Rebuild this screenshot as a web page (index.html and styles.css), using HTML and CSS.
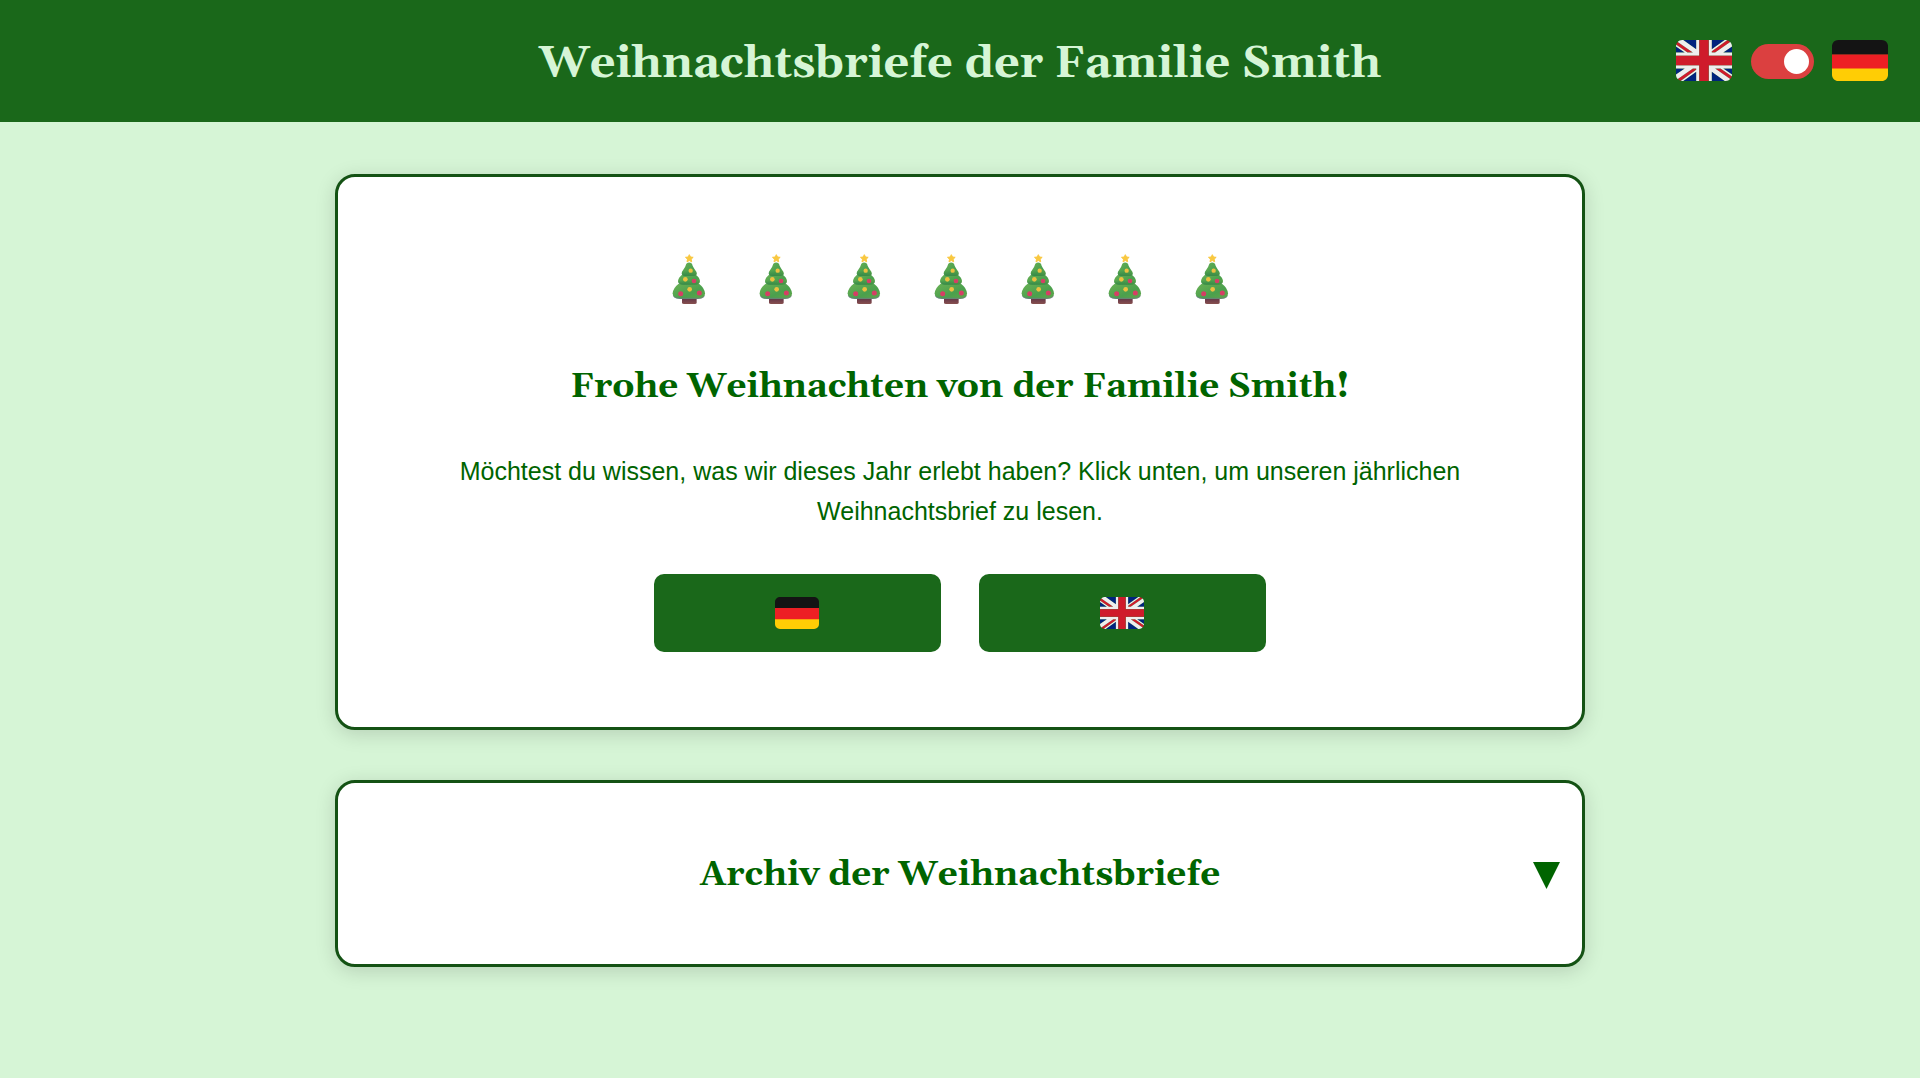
FILE: index.html
```html
<!DOCTYPE html>
<html lang="de">
<head>
<meta charset="utf-8">
<title>Weihnachtsbriefe der Familie Smith</title>
<link rel="stylesheet" href="styles.css">
</head>
<body>
<svg class="sprites" width="0" height="0" aria-hidden="true">
  <defs>
    <linearGradient id="leaf" x1="0" y1="0" x2="1" y2="1">
      <stop offset="0" stop-color="#6ab155"/>
      <stop offset=".6" stop-color="#4ba04d"/>
      <stop offset="1" stop-color="#62a848"/>
    </linearGradient>
    <linearGradient id="trunk" x1="0" y1="0" x2="0" y2="1">
      <stop offset="0" stop-color="#5b2f45"/>
      <stop offset="1" stop-color="#87504f"/>
    </linearGradient>
    <linearGradient id="shade" x1="0" y1="0" x2="0" y2="1">
      <stop offset=".6" stop-color="#2f7f45" stop-opacity="0"/>
      <stop offset="1" stop-color="#2f7f45" stop-opacity=".7"/>
    </linearGradient>
  </defs>
  <symbol id="tree" viewBox="36 27 102 150">
    <path fill="url(#trunk)" d="M66 156h44v17q0 4-6 4H72q-6 0-6-4z"/>
    <path fill="url(#leaf)" d="M56 116q-17 13-18 29 0 17 22 17h54q21 0 21-17-1-16-18-29z"/>
    <path fill="#7668a0" opacity=".45" d="M38 149q2 13 22 13h54q19 0 21-13-5 9-21 9H60q-17 0-22-9z"/>
    <path fill="url(#leaf)" d="M68 88q-13 10-14 20 0 11 16 11h34q16 0 16-11-1-10-14-20z"/>
    <path fill="url(#shade)" d="M68 88q-13 10-14 20 0 11 16 11h34q16 0 16-11-1-10-14-20z"/>
    <path fill="url(#leaf)" d="M79 56q8-7 17 0 2 9 13 24 5 12-9 13H76q-14-1-10-13 11-14 13-24z"/>
    <path fill="url(#shade)" d="M79 56q8-7 17 0 2 9 13 24 5 12-9 13H76q-14-1-10-13 11-14 13-24z"/>
    <path fill="#f9c840" stroke="#f9c840" stroke-width="3" stroke-linejoin="round" d="M88 29l3.500 7 8 1-6 5.500 1.500 8-7-4-7 4 1.500-8-6-5.500 8-1z"/>
    <g fill="#edc040"><circle cx="92" cy="77" r="6.500"/><circle cx="76" cy="103" r="7"/><circle cx="89" cy="133" r="7"/></g>
    <g fill="#d53f65"><circle cx="102" cy="108" r="7"/><circle cx="62" cy="146" r="7.500"/><circle cx="118" cy="144" r="7.500"/></g>
  </symbol>
  <symbol id="flag-de" viewBox="0 5 36 26" preserveAspectRatio="none">
    <path fill="#FFCD05" d="M0 27c0 2.209 1.791 4 4 4h28c2.209 0 4-1.791 4-4v-4.500H0V27z"/>
    <path fill="#ED1F24" d="M0 14h36v9H0z"/>
    <path fill="#141414" d="M32 5H4C1.791 5 0 6.791 0 9v5h36V9c0-2.209-1.791-4-4-4z"/>
  </symbol>
  <symbol id="flag-gb" viewBox="0 5 36 26" preserveAspectRatio="none">
    <path fill="#00247D" d="M0 9.059V13h5.628zM4.664 31H13v-5.837zM23 25.164V31h8.335zM0 23v3.941L5.630 23zM31.337 5H23v5.837zM36 26.942V23h-5.631zM36 13V9.059L30.371 13zM13 5H4.664L13 10.837z"/>
    <path fill="#CF1B2B" d="M25.140 23l9.712 6.801c.471-.479.808-1.082.990-1.749L28.627 23H25.140zM13 23h-2.141l-9.711 6.800c.521.530 1.189.909 1.938 1.085L13 23.943V23zm10-10h2.141l9.711-6.800c-.521-.530-1.188-.909-1.937-1.085L23 12.057V13zm-12.141 0L1.148 6.200C.677 6.680.340 7.282.157 7.949L7.372 13h3.487z"/>
    <path fill="#EEE" d="M36 21H21v10h2v-5.836L31.335 31H32c1.117 0 2.126-.461 2.852-1.199L25.140 23h3.487l7.215 5.052c.093-.337.158-.686.158-1.052v-.058L30.369 23H36v-2zM0 21v2h5.630L0 26.941V27c0 1.091.439 2.078 1.148 2.800l9.711-6.800H13v.943l-9.814 6.941c.264.073.532.116.814.116h.664L13 25.163V31h2V21H0zM36 9c0-1.091-.439-2.078-1.148-2.800L25.141 13H23v-.943l9.815-6.942C32.551 5.043 32.283 5 32 5h-.663L23 10.837V5h-2v10h15v-2h-5.629L36 9.059V9zM13 5v5.837L4.664 5H4c-1.118 0-2.126.461-2.852 1.200l9.711 6.800H7.372L.157 7.949C.065 8.286 0 8.635 0 9v.059L5.628 13H0v2h15V5h-2z"/>
    <path fill="#CF1B2B" d="M21 15V5h-6v10H0v6h15v10h6V21h15v-6z"/>
  </symbol>
</svg>

<header class="header">
  <h1 class="title">Weihnachtsbriefe der Familie Smith</h1>
  <div class="language">
    <svg class="flag"><use href="#flag-gb"/></svg>
    <span class="toggle"><span class="knob"></span></span>
    <svg class="flag"><use href="#flag-de"/></svg>
  </div>
</header>

<main class="content">
  <section class="card welcome">
    <div class="trees">
      <svg class="tree"><use href="#tree"/></svg>
      <svg class="tree"><use href="#tree"/></svg>
      <svg class="tree"><use href="#tree"/></svg>
      <svg class="tree"><use href="#tree"/></svg>
      <svg class="tree"><use href="#tree"/></svg>
      <svg class="tree"><use href="#tree"/></svg>
      <svg class="tree"><use href="#tree"/></svg>
    </div>
    <h2 class="heading">Frohe Weihnachten von der Familie Smith!</h2>
    <p class="intro">Möchtest du wissen, was wir dieses Jahr erlebt haben? Klick unten, um unseren jährlichen Weihnachtsbrief zu lesen.</p>
    <div class="buttons">
      <button class="button" aria-label="Deutsch"><svg class="flag-small"><use href="#flag-de"/></svg></button>
      <button class="button" aria-label="English"><svg class="flag-small"><use href="#flag-gb"/></svg></button>
    </div>
  </section>
  <section class="card archive">
    <h2 class="heading">Archiv der Weihnachtsbriefe</h2>
    <svg class="arrow" viewBox="0 0 27 27"><path d="M0 0h27L13.500 27z"/></svg>
  </section>
</main>
</body>
</html>
```
FILE: styles.css
```css
* { box-sizing: border-box; }

body {
  margin: 0;
  min-height: 100vh;
  background: #d6f5d6;
  color: #006400;
  font-family: "Liberation Sans", Arial, sans-serif;
}

.sprites { position: absolute; }

.header {
  display: grid;
  grid-template-columns: 1fr auto 1fr;
  align-items: center;
  height: 122px;
  padding: 0 32px;
  background: #1a681a;
}

.title {
  grid-column: 2;
  margin: 0;
  padding-top: 5px;
  color: #d6f5d6;
  font: bold 45px/60px Gelasio, Georgia, "Liberation Serif", serif;
  white-space: nowrap;
}

.language {
  display: flex;
  justify-content: flex-end;
  align-items: center;
  padding-bottom: 1px;
}

.flag { width: 56px; height: 41px; }

.toggle {
  display: flex;
  justify-content: flex-end;
  align-items: center;
  width: 63px;
  height: 35px;
  margin: 2px 18px 0 19px;
  padding: 5px;
  border-radius: 18px;
  background: #db4040;
}

.knob {
  width: 25px;
  height: 25px;
  border-radius: 50%;
  background: #fff;
}

.content {
  display: flex;
  flex-direction: column;
  gap: 50px;
  width: 1250px;
  margin: 52px auto 0;
}

.card {
  border: 3px solid #145214;
  border-radius: 20px;
  background: #fff;
  box-shadow: 0 4px 20px rgba(0, 0, 0, .15);
}

.welcome {
  display: flex;
  flex-direction: column;
  align-items: center;
  height: 556px;
  padding-top: 77px;
}

.trees {
  display: flex;
  gap: 53.2px;
  margin-right: 18.5px;
}

.tree { width: 34px; height: 50px; }

.heading {
  margin: 0;
  font: bold 35px/48px Gelasio, Georgia, "Liberation Serif", serif;
  white-space: nowrap;
}

.welcome .heading { margin-top: 59px; }

.intro {
  width: 1040px;
  margin: 40px 0 0;
  font-size: 25px;
  line-height: 40px;
  text-align: center;
}

.buttons {
  display: flex;
  gap: 38px;
  margin-top: 43px;
}

.button {
  display: flex;
  justify-content: center;
  align-items: center;
  width: 287px;
  height: 78px;
  padding: 0 1px 0 0;
  border: 0;
  border-radius: 10px;
  background: #1a681a;
}

.flag-small { width: 44px; height: 32px; }

.archive {
  display: grid;
  grid-template-columns: 1fr auto 1fr;
  align-items: center;
  height: 187px;
  padding: 0 22px;
}

.archive .heading {
  grid-column: 2;
  padding-top: 3px;
}

.arrow {
  justify-self: end;
  width: 27px;
  height: 27px;
  margin-top: 4px;
  fill: #006400;
}
```
